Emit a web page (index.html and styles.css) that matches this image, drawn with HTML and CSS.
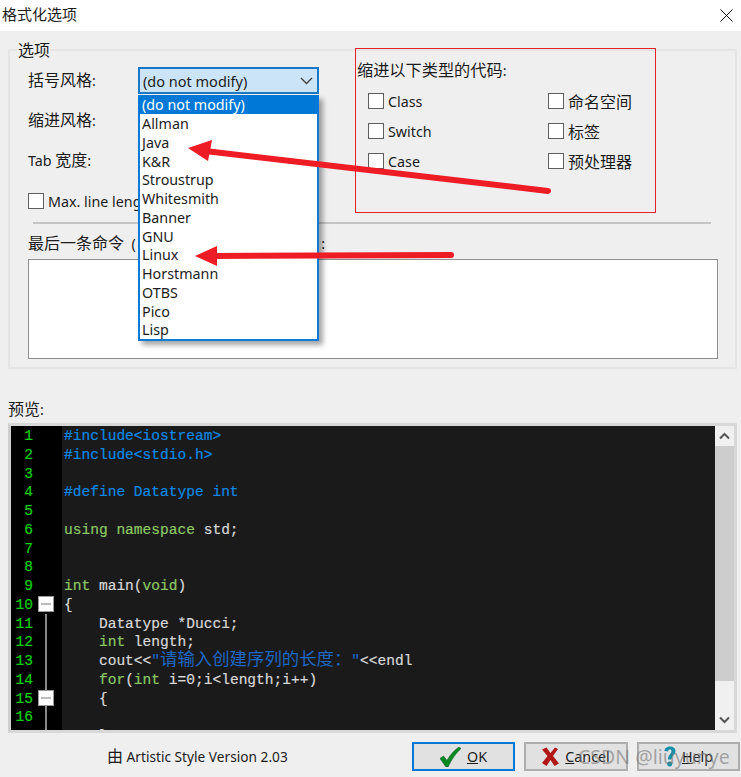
FILE: index.html
```html
<!DOCTYPE html>
<html lang="zh">
<head>
<meta charset="utf-8">
<title>格式化选项</title>
<link rel="stylesheet" href="styles.css">
</head>
<body>
<div class="dialog">
  <header class="titlebar">
    <span class="zh">格式化选项</span>
    <svg class="close" width="13" height="13" viewBox="0 0 13 13"><path d="M.5.5l12 12M12.500.5l-12 12" stroke="#111" stroke-width="1" fill="none"/></svg>
  </header>
  <main class="content">
    <fieldset class="group">
      <legend class="zh">选项</legend>
      <div class="top">
        <div class="left">
          <div class="row"><span class="lbl"><span class="zh">括号风格</span>:</span>
            <div class="combo"><span>(do not modify)</span>
              <svg width="13" height="8" viewBox="0 0 13 8"><path d="M1 1l5.500 5.500L12 1" stroke="#444" stroke-width="1.400" fill="none"/></svg>
            </div>
          </div>
          <div class="row"><span class="lbl"><span class="zh">缩进风格</span>:</span></div>
          <div class="row"><span class="lbl">Tab <span class="zh">宽度</span>:</span></div>
          <div class="row"><label class="check"><i class="box"></i><span class="t">Max. line length:</span></label></div>
        </div>
        <div class="right">
          <div class="heading"><span class="zh">缩进以下类型的代码</span>:</div>
          <div class="checks">
            <label class="check"><i class="box"></i><span class="t">Class</span></label>
            <label class="check"><i class="box"></i><span class="zh">命名空间</span></label>
            <label class="check"><i class="box"></i><span class="t">Switch</span></label>
            <label class="check"><i class="box"></i><span class="zh">标签</span></label>
            <label class="check"><i class="box"></i><span class="t">Case</span></label>
            <label class="check"><i class="box"></i><span class="zh">预处理器</span></label>
          </div>
        </div>
      </div>
      <div class="sep"></div>
      <div class="cmd"><span><span class="zh">最后一条命令</span>&nbsp; (&nbsp; Artistic Style)</span><span>:</span></div>
      <div class="cmdbox"></div>
    </fieldset>

    <div class="preview-label"><span class="zh">预览</span>:</div>
    <div class="editor">
      <div class="code">
        <div class="ln"><span class="no">1</span><span class="fold"></span><span class="src pp">#include&lt;iostream&gt;</span></div>
        <div class="ln"><span class="no">2</span><span class="fold"></span><span class="src pp">#include&lt;stdio.h&gt;</span></div>
        <div class="ln"><span class="no">3</span><span class="fold"></span><span class="src"></span></div>
        <div class="ln"><span class="no">4</span><span class="fold"></span><span class="src pp">#define Datatype int</span></div>
        <div class="ln"><span class="no">5</span><span class="fold"></span><span class="src"></span></div>
        <div class="ln"><span class="no">6</span><span class="fold"></span><span class="src"><b>using namespace</b> std;</span></div>
        <div class="ln"><span class="no">7</span><span class="fold"></span><span class="src"></span></div>
        <div class="ln"><span class="no">8</span><span class="fold"></span><span class="src"></span></div>
        <div class="ln"><span class="no">9</span><span class="fold"></span><span class="src"><b>int</b> main(<b>void</b>)</span></div>
        <div class="ln"><span class="no">10</span><span class="fold"><i class="foldbox"></i></span><span class="src">{</span></div>
        <div class="ln"><span class="no">11</span><span class="fold on"></span><span class="src">    Datatype *Ducci;</span></div>
        <div class="ln"><span class="no">12</span><span class="fold on"></span><span class="src">    <b>int</b> length;</span></div>
        <div class="ln"><span class="no">13</span><span class="fold on"></span><span class="src">    cout&lt;&lt;<s>"</s><em>请输入创建序列的长度：</em><s>"</s>&lt;&lt;endl</span></div>
        <div class="ln"><span class="no">14</span><span class="fold on"></span><span class="src">    <b>for</b>(<b>int</b> i=0;i&lt;length;i++)</span></div>
        <div class="ln"><span class="no">15</span><span class="fold on"><i class="foldbox"></i></span><span class="src">    {</span></div>
        <div class="ln"><span class="no">16</span><span class="fold on"></span><span class="src"></span></div>
        <div class="ln"><span class="no">17</span><span class="fold on"></span><span class="src">    }</span></div>
      </div>
      <div class="scrollbar">
        <svg width="13" height="8" viewBox="0 0 13 8"><path d="M2 6.500l4.500-4.500L11 6.500" stroke="#555" stroke-width="2" fill="none"/></svg>
        <div class="thumb"></div>
        <svg width="13" height="8" viewBox="0 0 13 8"><path d="M2 1.500l4.500 4.500L11 1.500" stroke="#555" stroke-width="2" fill="none"/></svg>
      </div>
    </div>
    <footer class="footer">
      <span class="version"><span class="zh">由</span> Artistic Style Version 2.03</span>
      <div class="buttons">
        <button class="btn default">
          <svg width="21" height="20" viewBox="0 0 21 20"><path d="M0 11.500l3.500-2.500 3.500 4.500C10 8 14 3.500 19 0l2 1.500C15.500 6.500 11.500 12.500 8 20H6z" fill="#0c8a22" stroke="#0a5a2a" stroke-width=".6"/></svg>
          <span><u>O</u>K</span>
        </button>
        <button class="btn mid">
          <svg width="17" height="19" viewBox="0 0 17 19"><path d="M0 2.500L4.500 0.500l4 5.500L13 0.500l3 1.500-5 7 6 7.500-4.500 2.500-4-6-4 6L0 16l5.500-7z" fill="#b01818"/></svg>
          <span><u>C</u>ancel</span>
        </button>
        <button class="btn">
          <svg width="12" height="21" viewBox="0 0 12 21"><path d="M.5 5C.5-1 11.500-1 11.500 5c0 4-4 4.500-4 8.500h-3.500c0-5 3.500-5.500 3.500-8.500 0-2-3.500-2-3.500.5z" fill="#1690a8"/><circle cx="5.700" cy="18" r="2.500" fill="#1690a8"/></svg>
          <span><u>H</u>elp</span>
        </button>
      </div>
    </footer>
  </main>

  <ul class="droplist">
    <li class="sel">(do not modify)</li>
    <li>Allman</li>
    <li>Java</li>
    <li>K&amp;R</li>
    <li>Stroustrup</li>
    <li>Whitesmith</li>
    <li>Banner</li>
    <li>GNU</li>
    <li>Linux</li>
    <li>Horstmann</li>
    <li>OTBS</li>
    <li>Pico</li>
    <li>Lisp</li>
  </ul>

  <div class="redbox"></div>
  <svg class="arrows" width="741" height="777" viewBox="0 0 741 777">
    <path d="M548 191L205 151" stroke="#ee1c25" stroke-width="6" stroke-linecap="round" fill="none"/>
    <path d="M188 148L212 140L208 161z" fill="#ee1c25"/>
    <path d="M451 255L212 256" stroke="#ee1c25" stroke-width="6" stroke-linecap="round" fill="none"/>
    <path d="M195 256L217 246L217 266z" fill="#ee1c25"/>
  </svg>
  <div class="watermark">CSDN @liuyunye</div>
</div>
</body>
</html>
```
FILE: styles.css
```css
* { box-sizing: border-box; }
html, body { margin: 0; padding: 0; }
body {
  font-family: "Noto Sans", "Noto Sans CJK SC", sans-serif;
  font-size: 14.300px;
  color: #1c1c1c;
}
.zh { font-family: "Noto Sans CJK SC", sans-serif; font-size: 16px; line-height: 0; }
.dialog {
  position: relative;
  width: 741px;
  height: 777px;
  overflow: hidden;
  background: #efefef;
}
.titlebar {
  height: 31px;
  background: #fff;
  display: flex;
  align-items: center;
  justify-content: space-between;
  padding: 0 8px 3px 2px;
}
.titlebar .zh { font-size: 15px; }
.close { margin-top: 3px; }
.content { padding: 0 4px 0 8px; }
.group {
  margin: 9px 0 0;
  height: 329px;
  padding: 0 18px 0 18px;
  border: 2px solid #e4e4e4;
  min-width: 0;
}
.group legend {
  padding: 0 1px;
  margin-left: -11px;
  line-height: 18px;
  height: 20px;
}
.top { display: flex; height: 162px; }
.left { width: 330px; padding-top: 7px; display: flex; flex-direction: column; gap: 13px; }
.row { height: 27px; display: flex; align-items: center; }
.lbl { width: 110px; height: 20px; line-height: 20px; }
.combo {
  width: 181px;
  height: 27px;
  background: #cce4f7;
  border: 2px solid #1a78c4;
  display: flex;
  align-items: center;
  justify-content: space-between;
  padding: 0 4px 0 3px;
  font-size: 14.500px;
}
.heading { height: 20px; line-height: 22px; margin-left: -1px; }
.heading .zh { font-size: 16.200px; }
.checks {
  margin: 6px 0 0 10px;
  display: grid;
  grid-template-columns: 180px 120px;
  grid-auto-rows: 30px;
}
.check { display: flex; align-items: center; gap: 4px; white-space: nowrap; line-height: 20px; }
.t { margin-top: 2px; }
.box {
  width: 16px;
  height: 16px;
  background: #fff;
  border: 1.500px solid #5f5f5f;
}
.sep { height: 2px; background: #c4c4c4; margin: 0 6px 0 5px; width: 678px; }
.cmd {
  display: flex;
  justify-content: space-between;
  width: 297px;
  height: 20px;
  margin-top: 9px;
  line-height: 22px;
  white-space: nowrap;
}
.cmdbox {
  margin-top: 6px;
  width: 690px;
  height: 100px;
  background: #fff;
  border: 1.500px solid #8e8e8e;
}
.preview-label { margin-top: 31px; height: 20px; line-height: 20px; }
.editor {
  margin-top: 3px;
  height: 310px;
  border: 3px solid #d8d8d8;
  border-left-color: #cfcfcf;
  display: flex;
  background: #f0f0f0;
}
.code {
  width: 704px;
  height: 100%;
  overflow: hidden;
  background: #1a1a1a;
  font-family: "Liberation Mono", monospace;
  font-size: 14.550px;
  color: #d8d8d8;
  -webkit-text-stroke: .2px currentColor;
}
.ln { height: 18.750px; line-height: 20.500px; display: flex; white-space: pre; }
.no {
  width: 22px;
  background: #000;
  color: #0fd00f;
  text-align: right;
}
.fold {
  width: 29px;
  background: #000;
  padding: 1px 0 0 5px;
}
.fold.on {
  background: linear-gradient(#8a8a8a, #8a8a8a) 12px 0 / 2px 100% no-repeat #000;
}
.foldbox {
  display: block;
  width: 16px;
  height: 16px;
  background: linear-gradient(#bbb, #bbb) center / 10px 2px no-repeat #fff;
  border: 1px solid #999;
}
.src { padding-left: 2px; }
.src b { font-weight: normal; color: #8cc765; }
.src s { text-decoration: none; color: #1e66c0; }
.src em { font-style: normal; color: #1e66c0; font-family: "Noto Sans CJK SC", sans-serif; font-size: 17.400px; line-height: 0; -webkit-text-stroke: 0; }
.pp { color: #0d88e2; }
.scrollbar {
  flex: 1;
  display: flex;
  flex-direction: column;
  align-items: center;
  background: #f0f0f0;
  padding: 6px 0;
}
.thumb { width: 100%; height: 235px; margin: 6px 0 auto; background: #cdcdcd; }
.footer {
  margin-top: 9px;
  display: flex;
  align-items: center;
  justify-content: space-between;
  padding: 0 0 0 99px;
  width: 732px;
}
.version { font-size: 13.700px; line-height: 20px; height: 20px; }
.buttons { display: flex; gap: 9px; }
.btn {
  width: 103px;
  height: 29px;
  background: #e1e1e1;
  border: 2px solid #adadad;
  font: inherit;
  color: inherit;
  display: flex;
  align-items: center;
  justify-content: center;
  gap: 6px;
  padding: 0;
}
.btn.mid { width: 104px; }
.btn.default { border-color: #0078d7; }
.droplist {
  position: absolute;
  left: 138px;
  top: 95px;
  width: 181px;
  height: 246px;
  margin: 0;
  padding: 0;
  list-style: none;
  background: #fff;
  border: 2px solid #0c7ad8;
  border-top: 0;
  box-shadow: 4px 4px 5px rgba(0, 0, 0, .35);
}
.droplist li { height: 18.750px; line-height: 20px; padding-left: 2px; }
.droplist .sel { background: #0078d7; color: #fff; margin: 0 -2px; padding-left: 4px; height: 19px; }
.redbox {
  position: absolute;
  left: 355px;
  top: 48px;
  width: 301px;
  height: 165px;
  border: 1px solid #e8202a;
}
.arrows { position: absolute; left: 0; top: 0; pointer-events: none; }
.watermark {
  position: absolute;
  left: 578px;
  top: 743px;
  color: rgba(120, 120, 120, .6);
  font-size: 19.500px;
  white-space: nowrap;
}
```
